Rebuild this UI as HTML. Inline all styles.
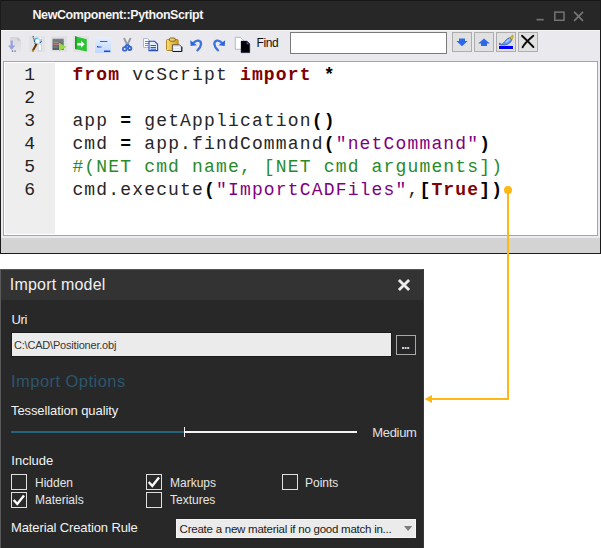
<!DOCTYPE html>
<html><head><meta charset="utf-8">
<style>
html,body{margin:0;padding:0;background:#fff;}
body{width:601px;height:548px;position:relative;overflow:hidden;font-family:"Liberation Sans",sans-serif;}
.abs{position:absolute;}
#win{left:0;top:0;width:601px;height:254px;background:#1b1b1b;}
#title{left:1px;top:0;width:599px;height:30px;background:#272727;border-top:1px solid #161616;box-sizing:border-box;}
#title .t{left:31.5px;top:7px;font-size:12.5px;font-weight:bold;color:#f4f4f4;letter-spacing:-0.41px;white-space:nowrap;}
#tool{left:1px;top:30px;width:599px;height:31px;background:#e9e9ee;box-shadow:inset 0 1px 0 #f6f6f9;}
#edwrap{left:1px;top:61px;width:599px;height:178px;background:#eaeaef;}
#editor{left:3px;top:61px;width:593px;height:173px;background:#fff;border:1px solid #a4a4ac;}
#gutter{left:5px;top:63px;width:50px;height:171px;background:#eeeeee;}
#strip{left:1px;top:238px;width:599px;height:15px;background:#d3d3d3;}
.code{font-family:"Liberation Mono",monospace;font-size:18px;letter-spacing:1.165px;line-height:23px;white-space:pre;color:#262626;}
.ln{left:5px;top:63.5px;width:31.2px;text-align:right;color:#222;}
.src{left:72.4px;top:63.5px;}
.k{color:#7f0000;font-weight:bold;}
.o{color:#000;font-weight:bold;}
.s{color:#7f007f;}
.c{color:#2a8a2a;}
#dlg{left:1px;top:269px;width:422px;height:279px;background:#282828;}
#dtitle{left:0;top:0;width:422px;height:31px;background:#333333;}
.lbl{color:#f2f2f2;font-size:13px;white-space:nowrap;}
.cb{width:14px;height:14px;border:1px solid #e0e0e0;background:#2a2a2a;}
</style></head><body>
<div id="win" class="abs"></div>
<div id="title" class="abs"><div class="t abs">NewComponent::PythonScript</div>
 <svg class="abs" style="left:528.5px;top:7px" width="60" height="16" viewBox="530 8 60 16">
  <rect x="536.5" y="18.8" width="7.2" height="1.7" fill="#727272"/>
  <rect x="554.8" y="12.1" width="9.2" height="8.2" fill="none" stroke="#747474" stroke-width="1.5"/>
  <path d="M574.2 11.8 L583 20.8 M583 11.8 L574.2 20.8" stroke="#767676" stroke-width="1.7" fill="none"/>
 </svg>
</div>
<div id="tool" class="abs">
<svg class="abs" style="left:0;top:0" width="599" height="31" viewBox="1 30 599 31">
 <!-- 1 doc import -->
 <defs><linearGradient id="g1" x1="0" y1="0" x2="0" y2="1"><stop offset="0" stop-color="#d6d6da"/><stop offset="1" stop-color="#e8e8ea"/></linearGradient></defs><path d="M10 37 H17.5 L21 40.5 V52.5 H10 Z" fill="url(#g1)"/>
 <path d="M17.5 37 V40.5 H21 Z" fill="#c4c4c8"/>
 <path d="M10.6 40.5 H12.8 V45.5 H15.3 L11.7 50 L8 45.5 H10.6 Z" fill="#98a0e4"/>
 <rect x="12" y="50.5" width="1.2" height="1.2" fill="#556"/><rect x="14.5" y="50.5" width="1.2" height="1.2" fill="#556"/>
 <!-- 2 debug/magnifier -->
 <rect x="29" y="36" width="16" height="16" fill="#e3e3e6"/>
 <path d="M38.2 44.6 q1.6 -1.4 3.2 0 v6.2 h-3.2 z" fill="#fbfbfd" stroke="#b4b8c0" stroke-width="0.5"/>
 <path d="M36.4 44.2 L32.9 50.4" stroke="#6a3a12" stroke-width="2.1" stroke-linecap="round"/>
 <circle cx="33" cy="50.4" r="1" fill="#b08a18"/>
 <circle cx="37" cy="40.8" r="2.6" fill="#e4f5fd" stroke="#8ad2f2" stroke-width="0.8"/>
 <path d="M34.6 41.6 A2.6 2.6 0 0 1 37.6 38.3" stroke="#30b0e8" stroke-width="1.1" fill="none"/>
 <circle cx="38" cy="41.4" r="1.3" fill="#fff"/>
 <path d="M33 36.2 L35.6 45.5" stroke="#222" stroke-width="1.1" stroke-dasharray="1.2 1" fill="none"/>
 <path d="M39.4 37.6 q1.6 -0.4 2 1.4" stroke="#fff" stroke-width="1" fill="none"/>
 <path d="M40 42.8 L41.6 41.2" stroke="#2a60b8" stroke-width="1.2"/>
 <circle cx="41.2" cy="40" r="0.7" fill="#48a8e0"/>
 <!-- 3 run -->
 <rect x="51" y="36" width="16" height="16" fill="#e2e2e6"/>
 <defs><linearGradient id="g3" x1="0" y1="0" x2="0" y2="1"><stop offset="0" stop-color="#7a8284"/><stop offset="1" stop-color="#555b5d"/></linearGradient></defs><rect x="52.5" y="38.7" width="11.2" height="11.3" fill="url(#g3)"/>
 <rect x="53.5" y="42" width="5" height="1" fill="#90989a"/><rect x="53.5" y="44" width="6" height="1" fill="#c08080"/><rect x="53.5" y="46.5" width="4" height="1" fill="#858d8f"/>
 <path d="M59 42.8 L66.4 47 L59 51.2 Z" fill="#98da48"/>
 <!-- 4 green -->
 <rect x="73" y="36" width="16" height="16" fill="#e2e2e6"/>
 <path d="M75 36.3 L86.8 39.3 V51.6 L75 49 Z" fill="#2ac434"/>
 <path d="M75 36.3 L76.6 36.8 V49.4 L75 49 Z" fill="#189a1c"/>
 <path d="M77.3 43 H81 V40.8 L84.6 44.3 L81 47.8 V45.6 H77.3 Z" fill="#fff"/>
 <!-- 5 blue lines -->
 <defs><linearGradient id="g5" x1="0" y1="0" x2="0" y2="1"><stop offset="0" stop-color="#e6eeff"/><stop offset="1" stop-color="#c2d8ff"/></linearGradient></defs>
 <rect x="95" y="37" width="16" height="16" fill="url(#g5)"/>
 <rect x="100" y="41" width="7.4" height="1" fill="#2a62e0"/>
 <rect x="97" y="46" width="1.4" height="1.4" fill="#1a48c0"/><rect x="98" y="46.5" width="3.6" height="1" fill="#2a62e0"/>
 <rect x="104" y="50.5" width="6.2" height="1.5" fill="#1450d8"/>
 <!-- 6 scissors -->
 <path d="M124 38 L127.3 45.2 M130.6 38 L127.3 45.2" stroke="#949ca8" stroke-width="1.9" fill="none"/>
 <path d="M127.3 44.6 L125 47 M127.3 44.6 L129.6 46.6" stroke="#3a68d0" stroke-width="2.2" fill="none"/>
 <circle cx="124.7" cy="48.9" r="1.8" fill="#f0f3fa" stroke="#3a68d0" stroke-width="1.8"/>
 <circle cx="129.7" cy="48.3" r="1.7" fill="#f0f3fa" stroke="#3462c8" stroke-width="1.8"/>
 <!-- 7 copy -->
 <path d="M143.5 38.5 H147.6 L150 40.9 V47.5 H143.5 Z" fill="#fbfdff" stroke="#a8b8dc" stroke-width="1"/>
 <path d="M145 41.5 H149 M145 43.5 H149 M145 45.5 H148" stroke="#5a8ae0" stroke-width="1"/>
 <path d="M149 41.3 H154.6 L157.6 44.3 V50.6 H149 Z" fill="#e6eefc" stroke="#2a50b4" stroke-width="1.1"/>
 <path d="M150.5 45.5 H156 M150.5 47.5 H156 M150.5 49.2 H156" stroke="#2a5ad0" stroke-width="1"/>
 <!-- 8 paste -->
 <defs><linearGradient id="g8" x1="0" y1="0" x2="1" y2="0"><stop offset="0" stop-color="#f8de70"/><stop offset="1" stop-color="#d89a1c"/></linearGradient></defs>
 <rect x="166.5" y="39.5" width="11.6" height="11" rx="1" fill="url(#g8)" stroke="#a87c14" stroke-width="0.9"/>
 <rect x="169.4" y="38" width="5.8" height="3.2" rx="1.2" fill="#f2d070" stroke="#6a5010" stroke-width="0.8"/>
 <path d="M172.4 44.8 H179.4 L181.8 47 V51.5 H172.4 Z" fill="#dfe6f2" stroke="#4a4a4a" stroke-width="0.9"/>
 <path d="M181.8 46.6 V51.5 H172.8" stroke="#1a1a1a" stroke-width="1" fill="none"/>
 <path d="M174 47.5 H179.6 M174 49.5 H179.6" stroke="#f8fafc" stroke-width="0.9"/>
 <!-- 9 undo -->
 <path d="M197.4 50.3 C201.8 46.5 202.2 41.6 198.6 40.7 C196.8 40.3 195 41.2 193.6 42.8" stroke="#3a72e0" stroke-width="2.3" fill="none" stroke-linecap="round"/>
 <path d="M190.2 40.2 L190.7 45.9 L197 45.3 Z" fill="#2f66dc"/>
 <!-- 10 redo -->
 <path d="M218 50.3 C213.6 46.5 213.2 41.6 216.8 40.7 C218.6 40.3 220.4 41.2 221.8 42.8" stroke="#3a72e0" stroke-width="2.3" fill="none" stroke-linecap="round"/>
 <path d="M225.2 40.2 L224.7 45.9 L218.4 45.3 Z" fill="#2f66dc"/>
 <!-- 11 docs -->
 <path d="M235.3 37.4 H240.5 L243.3 40.2 V49.3 H235.3 Z" fill="#fff" stroke="#9aa2b8" stroke-width="0.7"/>
 <path d="M241 41 H247 L249.8 43.8 V52.7 H241 Z" fill="#000" stroke="#1a2a6a" stroke-width="0.4"/>
 <path d="M246.6 41.6 V44.2 H249.2 Z" fill="#4a5ac0"/>
 <!-- find buttons -->
 <g fill="#e1e1e1" stroke="#adadad" stroke-width="1">
  <rect x="452.5" y="32.5" width="19" height="19"/><rect x="474.5" y="32.5" width="19" height="19"/><rect x="496.5" y="32.5" width="19" height="19"/><rect x="518.5" y="32.5" width="19" height="19"/>
 </g>
 <path d="M459 38.5 H465 V41 H467.6 L462 46.2 L456.4 41 H459 Z" fill="#2a6ae8"/>
 <path d="M484 38.4 L489.8 43.4 H487 V46 H481 V43.4 H478.2 Z" fill="#2a6ae8"/>
 <rect x="498.6" y="45.4" width="14.9" height="4" fill="#f4eed8"/>
 <rect x="499" y="45.9" width="14" height="3.1" fill="#0000ff"/>
 <path d="M499.3 44.6 V43.2 H500.3 V44.3 C503 44.6 504 42 506 40 C508 38 510 37.3 511.6 37.6 C512.3 39.5 511.5 41.6 509.5 43.2 C507 45.2 503 45.3 499.3 44.6 Z" fill="#5e92ea" stroke="#2a52c0" stroke-width="0.6"/>
 <path d="M505.5 41.5 C507 39.8 509 38.6 510.6 38.6 C510.4 40.4 508 42.6 505.5 43.2 Z" fill="#a6c8f8"/>
 <path d="M510 38.2 C510.5 36.6 511.8 35.3 513 35 C513.5 36.5 513 38.4 511.9 39.6 Z" fill="#e4bc24" stroke="#8a6a10" stroke-width="0.4"/>
 <path d="M522 35.8 C526 39.5 530 43.5 533.4 47 M533.3 35.8 C529 39.5 524.5 43.5 522.6 47.2" stroke="#0a0a0a" stroke-width="1.9" fill="none" stroke-linecap="round"/>
</svg>
<div class="abs" style="left:255.5px;top:6px;font-size:12px;color:#111;line-height:14px;letter-spacing:-0.4px">Find</div>
<div class="abs" style="left:289px;top:2px;width:155px;height:20px;background:#fff;border:1px solid #7a7a7a"></div>
</div>
<div id="edwrap" class="abs"></div>
<div id="editor" class="abs"></div>
<div id="gutter" class="abs"></div>
<div id="strip" class="abs"></div>
<div class="abs code ln">1
2
3
4
5
6</div>
<div class="abs code src"><span class="k">from</span> vcScript <span class="k">import</span> <span class="o">*</span>

app <span class="o">=</span> getApplication<span class="o">()</span>
cmd <span class="o">=</span> app.findCommand<span class="o">(</span><span class="s">"netCommand"</span><span class="o">)</span>
<span class="c">#(NET cmd name, [NET cmd arguments])</span>
cmd.execute<span class="o">(</span><span class="s">"ImportCADFiles"</span>,<span class="o">[</span><span class="k">True</span><span class="o">])</span></div>

<div id="dlg" class="abs"><div id="dtitle" class="abs"></div>
<div class="abs lbl" style="left:8.8px;top:6px;font-size:16px;line-height:20px;color:#f0f0f0;letter-spacing:0.2px">Import model</div>
<svg class="abs" style="left:395px;top:8px" width="16" height="16" viewBox="0 0 16 16"><path d="M2.9 2.9 L13.1 13.1 M13.1 2.9 L2.9 13.1" stroke="#ececec" stroke-width="2.8" fill="none"/></svg>
<div class="abs lbl" style="left:10.4px;top:43px;line-height:16px;letter-spacing:-0.3px">Uri</div>
<div class="abs" style="left:10px;top:63px;width:381px;height:25px;background:#1c1c1c"></div><div class="abs" style="left:11px;top:64px;width:379px;height:23px;background:#ebebeb"></div>
<div class="abs" style="left:13px;top:69px;font-size:11px;line-height:14px;color:#363636;white-space:nowrap;letter-spacing:-0.2px">C:\CAD\Positioner.obj</div>
<div class="abs" style="left:395px;top:66px;width:18px;height:18px;border:1px solid #a8a8a8;background:#262626"></div>
<div class="abs" style="left:401px;top:78px;width:2px;height:2px;background:#ccd;box-shadow:2.6px 0 0 #ccd,5.2px 0 0 #ccd"></div>
<div class="abs" style="left:10px;top:102px;font-size:16.5px;line-height:20px;color:#2c566d;white-space:nowrap;letter-spacing:0.46px">Import Options</div>
<div class="abs lbl" style="left:10px;top:133.5px;line-height:16px;letter-spacing:-0.1px">Tessellation quality</div>
<div class="abs" style="left:10px;top:162px;width:174px;height:2px;background:#23637d"></div>
<div class="abs" style="left:183px;top:162px;width:173px;height:2px;background:#f4f4f4"></div>
<div class="abs" style="left:183px;top:158px;width:1px;height:10px;background:#f4f4f4"></div>
<div class="abs lbl" style="left:371.2px;top:156px;line-height:16px;color:#e0e0e0;letter-spacing:-0.3px">Medium</div>
<div class="abs lbl" style="left:10.3px;top:184px;line-height:16px">Include</div>
<div class="abs cb" style="left:10px;top:205px"></div>
<div class="abs cb" style="left:10px;top:223px"></div>
<div class="abs cb" style="left:145px;top:205px"></div>
<div class="abs cb" style="left:145px;top:223px"></div>
<div class="abs cb" style="left:281px;top:205px"></div>
<svg class="abs" style="left:10px;top:223px" width="16" height="16" viewBox="0 0 16 16"><path d="M2.7 8 L6.3 12 L13 3.4" stroke="#fff" stroke-width="2.4" fill="none"/></svg>
<svg class="abs" style="left:145px;top:205px" width="16" height="16" viewBox="0 0 16 16"><path d="M2.7 8 L6.3 12 L13 3.4" stroke="#fff" stroke-width="2.4" fill="none"/></svg>
<div class="abs lbl" style="left:34px;top:205.7px;line-height:16px;font-size:12px;color:#e6e6e6">Hidden</div>
<div class="abs lbl" style="left:34px;top:223.2px;line-height:16px;font-size:12px;color:#e6e6e6">Materials</div>
<div class="abs lbl" style="left:169px;top:205.7px;line-height:16px;font-size:12px;color:#e6e6e6">Markups</div>
<div class="abs lbl" style="left:169px;top:223.2px;line-height:16px;font-size:12px;color:#e6e6e6">Textures</div>
<div class="abs lbl" style="left:304px;top:205.7px;line-height:16px;font-size:12px;color:#e6e6e6">Points</div>
<div class="abs lbl" style="left:10px;top:250.6px;line-height:16px;letter-spacing:-0.12px">Material Creation Rule</div>
<div class="abs" style="left:175px;top:250px;width:238px;height:17px;background:#ebebeb;border:1px solid #f6f6f6"></div>
<div class="abs" style="left:178.6px;top:252.6px;font-size:11.5px;line-height:14px;color:#1a1a1a;white-space:nowrap;letter-spacing:-0.24px">Create a new material if no good match in...</div>
<svg class="abs" style="left:402px;top:256px" width="12" height="8" viewBox="0 0 12 8"><path d="M1 1 H9.2 L5.1 5.9 Z" fill="#7c7c7c"/></svg>
<div class="abs" style="left:0;top:0;width:422px;height:1px;background:#555"></div>
</div>
<div class="abs" style="left:0;top:269px;width:1px;height:279px;background:#5a5a5a"></div>
<div class="abs" style="left:423px;top:269px;width:1px;height:279px;background:#3a3a3a"></div>
<svg class="abs" style="left:0;top:0" width="601" height="548" viewBox="0 0 601 548">
 <circle cx="508" cy="190" r="4" fill="#fdb813"/>
 <path d="M508 190 V399 H430" stroke="#fdb813" stroke-width="2" fill="none"/>
 <path d="M424.5 399 L432 395 V403 Z" fill="#fdb813"/>
</svg>
</body></html>
